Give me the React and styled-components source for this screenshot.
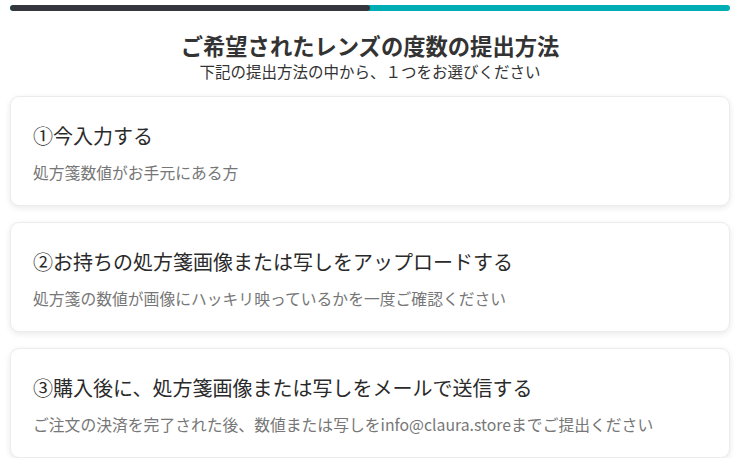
import React from "react";
import styled, { createGlobalStyle } from "styled-components";

const Global = createGlobalStyle`
  html, body { margin: 0; padding: 0; background: #fff; }
  body { font-family: "Noto Sans CJK JP", "Noto Sans", sans-serif; color: #333; }
`;

const Page = styled.div`
  width: 720px;
  padding: 5px 10px 0;
  display: flex;
  flex-direction: column;
`;

const Progress = styled.div`
  display: flex;
  height: 6px;
  border-radius: 3px;
  overflow: hidden;
  background: #00adb5;
`;

const ProgressFill = styled.div`
  width: ${(p) => p.$pct}%;
  background: #33363d;
  border-radius: 3px;
`;

const Header = styled.div`
  display: flex;
  flex-direction: column;
  align-items: center;
  margin-top: 19px;
`;

const Title = styled.h1`
  margin: 0;
  font-size: 22.3px;
  font-weight: 700;
  line-height: 30px;
  color: #333;
`;

const Subtitle = styled.p`
  margin: 0;
  font-size: 15.5px;
  line-height: 22px;
  color: #333;
`;

const List = styled.div`
  display: flex;
  flex-direction: column;
  gap: 16px;
  margin-top: 14px;
`;

const Card = styled.div`
  border: 1px solid #ececec;
  border-radius: 9px;
  box-shadow: 0 2px 6px rgba(0, 0, 0, 0.09);
  padding: 24px 22px 20px;
  display: flex;
  flex-direction: column;
  gap: 10px;
  background: #fff;
`;

const CardTitle = styled.div`
  font-size: 20px;
  line-height: 30px;
  font-weight: 400;
  color: #2a2a2a;
`;

const CardDesc = styled.div`
  font-size: 15.8px;
  line-height: 24px;
  color: #777;
`;

const options = [
  { title: "①今入力する", desc: "処方箋数値がお手元にある方" },
  {
    title: "②お持ちの処方箋画像または写しをアップロードする",
    desc: "処方箋の数値が画像にハッキリ映っているかを一度ご確認ください",
  },
  {
    title: "③購入後に、処方箋画像または写しをメールで送信する",
    desc: "ご注文の決済を完了された後、数値または写しをinfo@claura.storeまでご提出ください",
  },
];

export default function App() {
  return (
    <>
      <Global />
      <Page>
        <Progress>
          <ProgressFill $pct={50} />
        </Progress>
        <Header>
          <Title>ご希望されたレンズの度数の提出方法</Title>
          <Subtitle>下記の提出方法の中から、１つをお選びください</Subtitle>
        </Header>
        <List>
          {options.map((o) => (
            <Card key={o.title}>
              <CardTitle>{o.title}</CardTitle>
              <CardDesc>{o.desc}</CardDesc>
            </Card>
          ))}
        </List>
      </Page>
    </>
  );
}
